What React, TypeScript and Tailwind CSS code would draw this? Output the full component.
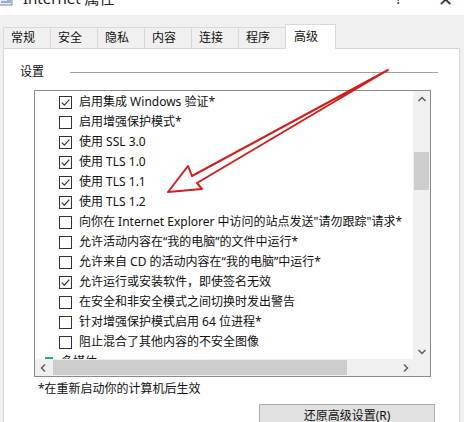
import React from 'react';

const tabs = ['常规', '安全', '隐私', '内容', '连接', '程序'];

const rows: { label: string; on: boolean }[] = [
  { label: '启用集成 Windows 验证*', on: true },
  { label: '启用增强保护模式*', on: false },
  { label: '使用 SSL 3.0', on: true },
  { label: '使用 TLS 1.0', on: true },
  { label: '使用 TLS 1.1', on: true },
  { label: '使用 TLS 1.2', on: true },
  { label: '向你在 Internet Explorer 中访问的站点发送"请勿跟踪"请求*', on: false },
  { label: '允许活动内容在“我的电脑”的文件中运行*', on: false },
  { label: '允许来自 CD 的活动内容在“我的电脑”中运行*', on: false },
  { label: '允许运行或安装软件，即使签名无效', on: true },
  { label: '在安全和非安全模式之间切换时发出警告', on: false },
  { label: '针对增强保护模式启用 64 位进程*', on: false },
  { label: '阻止混合了其他内容的不安全图像', on: false },
];

function Check({ on }: { on: boolean }) {
  return (
    <svg width="13" height="13" viewBox="0 0 13 13" className="shrink-0">
      <rect x="0.5" y="0.5" width="12" height="12" fill="#fff" stroke="#333" />
      {on && <path d="M2.8 6.6 L5.4 9.2 L10.3 3.6" fill="none" stroke="#333" strokeWidth="1.2" />}
    </svg>
  );
}

function Chevron({ dir }: { dir: 'up' | 'down' | 'left' | 'right' }) {
  const d = {
    up: 'M1.5 6 L5 2.5 L8.5 6',
    down: 'M1.5 4 L5 7.5 L8.5 4',
    left: 'M6 1.5 L2.5 5 L6 8.5',
    right: 'M4 1.5 L7.5 5 L4 8.5',
  }[dir];
  return (
    <svg width="10" height="10" viewBox="0 0 10 10">
      <path d={d} fill="none" stroke="#606060" strokeWidth="1.5" />
    </svg>
  );
}

export default function App() {
  return (
    <div
      className="relative w-[464px] h-[422px] overflow-hidden bg-[#f0f0f0] flex flex-col text-[12px] text-black"
      style={{ fontFamily: '"Segoe UI", "Noto Sans", "Noto Sans CJK SC", sans-serif' }}
    >
      {/* 标题栏 (cut at top) */}
      <div className="h-[15px] shrink-0 bg-white overflow-hidden">
        <div className="-mt-[9px] h-[15px] flex items-center">
          <svg width="16" height="14" viewBox="0 0 16 14" className="-ml-[2px]">
            <rect x="1" y="1" width="13" height="12" fill="#e8eef5" stroke="#7a8aa0" />
            <rect x="3" y="4" width="4" height="4" fill="#2f9e5a" />
            <path d="M9 5 h4 M9 8 h4 M3 10 h10" stroke="#4a6fa5" />
          </svg>
          <span className="ml-[9px] text-[15px] text-[#222]">Internet 属性</span>
          <span className="ml-auto mr-[36px] text-[15px] text-[#333]">?</span>
          <span className="mr-[11px] text-[18px] text-[#333] leading-none">✕</span>
        </div>
      </div>

      {/* 选项卡 */}
      <div className="h-[33px] shrink-0 flex items-end pl-[3px]">
        {tabs.map((t) => (
          <div
            key={t}
            className="w-[48px] h-[21px] border border-b-0 border-[#d9d9d9] -mr-px bg-[#f0f0f0] flex items-center pl-[7px] text-[#111]"
          >
            {t}
          </div>
        ))}
        <div className="relative z-10 w-[51px] h-[25px] -mb-px border border-b-0 border-[#d9d9d9] bg-white flex items-start pt-[3px] pl-[8px] text-[#111]">
          高级
        </div>
      </div>

      {/* 面板 */}
      <div className="ml-[3px] w-[457px] flex-1 border border-[#d9d9d9] bg-white flex flex-col">
        <div className="mt-[15px] h-[16px] flex items-center">
          <span className="pl-[16px] text-[#111]">设置</span>
          <div className="ml-[26px] mr-[21px] flex-1 h-px bg-[#a0a0a0]" />
        </div>

        {/* 列表框 */}
        <div className="mt-[10px] ml-[30px] w-[397px] h-[287px] shrink-0 border border-[#8a8a8a] grid grid-cols-[378px_17px] grid-rows-[268px_17px]">
          <div className="overflow-hidden pt-px">
            {rows.map((r) => (
              <div key={r.label} className="h-[20px] flex items-center pl-[24px] whitespace-nowrap text-[#111]">
                <Check on={r.on} />
                <span className="ml-[7px]">{r.label}</span>
              </div>
            ))}
            <div className="h-[20px] flex items-center pl-[7px] whitespace-nowrap text-[#111]">
              <svg width="14" height="14" viewBox="0 0 14 14" className="shrink-0">
                <rect x="3" y="2" width="8" height="10" fill="#2aa88a" />
                <rect x="5" y="4" width="4" height="6" fill="#d8f2ea" />
              </svg>
              <span className="ml-[5px]">多媒体</span>
            </div>
          </div>

          {/* 垂直滚动条 */}
          <div className="bg-[#f0f0f0] flex flex-col items-center">
            <div className="h-[17px] flex items-center">
              <Chevron dir="up" />
            </div>
            <div className="mt-[44px] w-[15px] h-[38px] bg-[#cdcdcd]" />
            <div className="mt-auto h-[17px] flex items-center">
              <Chevron dir="down" />
            </div>
          </div>

          {/* 水平滚动条 */}
          <div className="bg-[#f0f0f0] flex items-center">
            <div className="w-[17px] flex justify-center">
              <Chevron dir="left" />
            </div>
            <div className="ml-px w-[294px] h-[15px] bg-[#cdcdcd]" />
            <div className="ml-auto w-[17px] flex justify-center">
              <Chevron dir="right" />
            </div>
          </div>
          <div className="bg-[#f0f0f0]" />
        </div>

        <div className="mt-[4px] ml-[34px] h-[16px] flex items-center text-[#111]">*在重新启动你的计算机后生效</div>

        <div className="mt-[7px] ml-[255px] w-[176px] h-[23px] shrink-0 bg-[#e1e1e1] border border-[#adadad] flex items-center justify-center text-[#111]">
          还原高级设置(R)
        </div>
      </div>

      {/* 红色箭头标注 */}
      <svg className="absolute inset-0 pointer-events-none" width="464" height="422" viewBox="0 0 464 422">
        <path
          d="M388 70 L192 176 L188 166 L168 192 L202 189 L197 183 Z"
          fill="none"
          stroke="#cf2020"
          strokeWidth="2"
          strokeLinejoin="round"
        />
      </svg>
    </div>
  );
}
